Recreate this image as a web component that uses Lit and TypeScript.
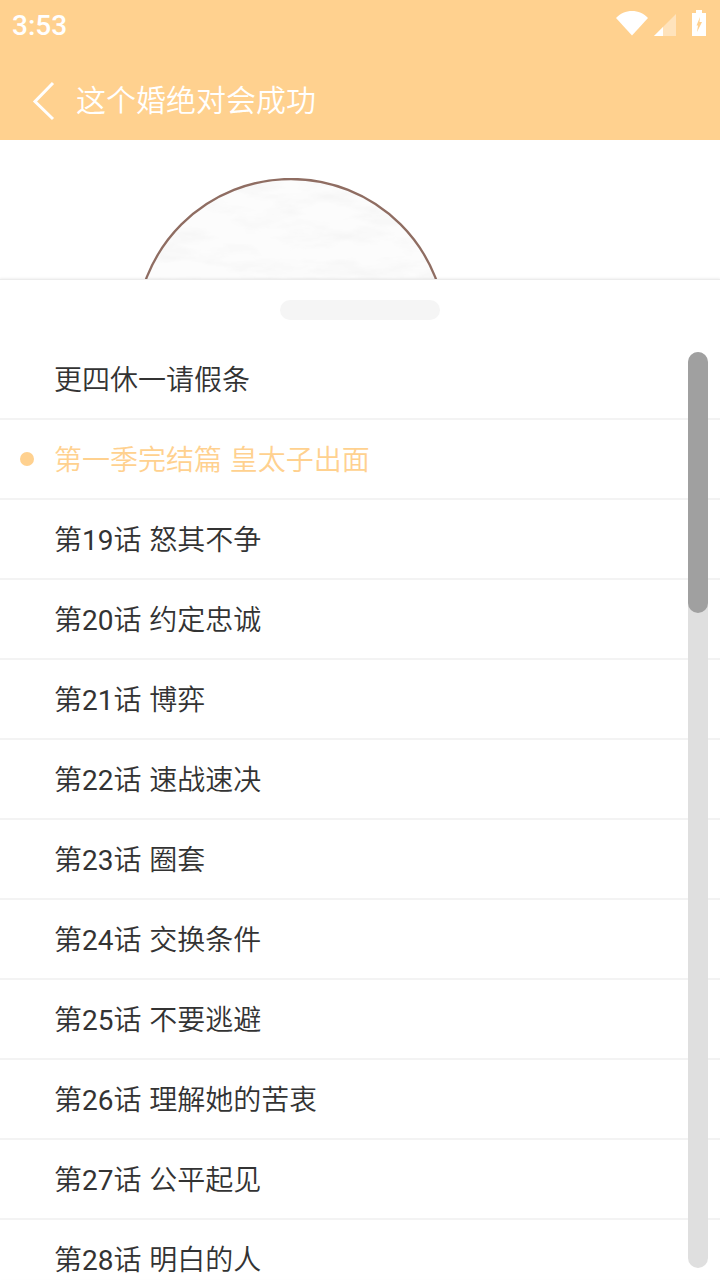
import { LitElement, html, css, svg } from "lit";
import { customElement } from "lit/decorators.js";

const rows = [
  "更四休一请假条",
  "第一季完结篇 皇太子出面",
  "第19话 怒其不争",
  "第20话 约定忠诚",
  "第21话 博弈",
  "第22话 速战速决",
  "第23话 圈套",
  "第24话 交换条件",
  "第25话 不要逃避",
  "第26话 理解她的苦衷",
  "第27话 公平起见",
  "第28话 明白的人",
];

@customElement("app-root")
export class AppRoot extends LitElement {
  static styles = css`
    :host {
      display: block;
      width: 720px;
      height: 1280px;
      overflow: hidden;
      background: #fff;
      font-family: Roboto, "Noto Sans CJK SC", "Noto Sans", sans-serif;
      font-weight: 350;
      color: #333;
    }
    .top {
      background: #ffd18f;
      height: 140px;
      display: flex;
      flex-direction: column;
      color: #fff;
    }
    .status {
      height: 50px;
      display: flex;
      align-items: center;
      justify-content: space-between;
      padding: 0 14px 0 12px;
    }
    .time {
      font-family: Roboto, sans-serif;
      font-weight: 500;
      font-size: 28px;
      line-height: 50px;
      padding-top: 1px;
    }
    .icons {
      display: flex;
      align-items: flex-end;
      padding-bottom: 4px;
    }
    .icons svg {
      display: block;
    }
    .wifi {
      margin-right: 6px;
    }
    .signal {
      margin-right: 16px;
    }
    .nav {
      flex: 1;
      display: flex;
      align-items: center;
      padding: 12px 0 0 32px;
      gap: 20px;
    }
    .nav svg {
      display: block;
    }
    .title {
      font-size: 30px;
      line-height: 40px;
    }
    .cover {
      height: 139px;
      overflow: hidden;
      padding: 38px 0 0 135px;
      box-sizing: border-box;
    }
    .cover svg {
      display: block;
    }
    .sheet {
      border-top: 1px solid #ececec;
      box-shadow: 0 -1px 2px rgba(0, 0, 0, 0.06);
      background: #fff;
      display: flex;
      position: relative;
      flex-direction: column;
      height: 1000px;
      box-sizing: border-box;
    }
    .handle-row {
      height: 60px;
      display: flex;
      align-items: center;
      justify-content: center;
      flex: none;
    }
    .handle {
      width: 160px;
      height: 20px;
      border-radius: 10px;
      background: #f5f5f5;
    }
    .row {
      height: 80px;
      flex: none;
      box-sizing: border-box;
      border-bottom: 2px solid #f3f3f3;
      display: flex;
      align-items: center;
      padding: 0 0 2px 20px;
      font-size: 28px;
      word-spacing: 1px;
    }
    .num {
      font-weight: 400;
    }
    .dot {
      width: 14px;
      height: 14px;
      border-radius: 50%;
      flex: none;
      margin: 2px 20px 0 0;
    }
    .row.active {
      color: #ffd18f;
    }
    .row.active .dot {
      background: #ffd18f;
    }
    .track {
      position: absolute;
      left: 688px;
      top: 72px;
      width: 20px;
      height: 916px;
      border-radius: 10px;
      background: #dfdfdf;
    }
    .thumb {
      width: 20px;
      height: 261px;
      border-radius: 10px;
      background: #a0a0a0;
    }
  `;

  private label(t: string) {
    return t
      .split(/(\d+)/)
      .map((p) => (/^\d+$/.test(p) ? html`<span class="num">${p}</span>` : p));
  }

  render() {
    return html`
      <div class="top">
        <div class="status">
          <span class="time">3:53</span>
          <div class="icons">
            <svg class="wifi" width="32" height="26" viewBox="0 0 32 26">
              <path d="M0 8C4 3.500 10 1 16 1s12 2.500 16 7L16 25.500Z" fill="#fff"/>
            </svg>
            <svg class="signal" width="22" height="22" viewBox="0 0 22 22">
              <path d="M0 22 22 0v22Z" fill="#fff" fill-opacity=".4"/>
              <path d="M0 22 9 13v9Z" fill="#fff"/>
            </svg>
            <svg width="14" height="26" viewBox="0 0 14 26">
              <path fill-rule="evenodd" fill="#fff" d="M4 0h6v3h4v23H0V3h4ZM8 7 4.500 15.500H6L5 22 10 12H7.500Z"/>
            </svg>
          </div>
        </div>
        <div class="nav">
          <svg width="24" height="40" viewBox="0 0 24 40">
            <path d="M21 2 3 20.500 21 38" fill="none" stroke="#fff" stroke-width="3"/>
          </svg>
          <span class="title">这个婚绝对会成功</span>
        </div>
      </div>
      <div class="cover">
        <svg width="312" height="312" viewBox="0 0 312 312">
          ${svg`
            <defs>
              <filter id="paper" x="0" y="0" width="100%" height="100%">
                <feTurbulence type="fractalNoise" baseFrequency="0.018 0.06" numOctaves="4" seed="7"/>
                <feColorMatrix values="0 0 0 0 0.88  0 0 0 0 0.88  0 0 0 0 0.88  1.6 0 0 0 -0.7"/>
              </filter>
              <clipPath id="disc"><circle cx="156" cy="156" r="155"/></clipPath>
            </defs>
            <circle cx="156" cy="156" r="155" fill="#fcfcfc"/>
            <rect width="312" height="312" filter="url(#paper)" clip-path="url(#disc)"/>
            <circle cx="156" cy="156" r="155" fill="none" stroke="#8f6d62" stroke-width="2.300"/>
          `}
        </svg>
      </div>
      <div class="sheet">
        <div class="handle-row"><div class="handle"></div></div>
        ${rows.map(
          (t, i) => html`<div class="row ${i === 1 ? "active" : ""}">
            <span class="dot"></span><span>${this.label(t)}</span>
          </div>`
        )}
        <div class="track"><div class="thumb"></div></div>
      </div>
    `;
  }
}
